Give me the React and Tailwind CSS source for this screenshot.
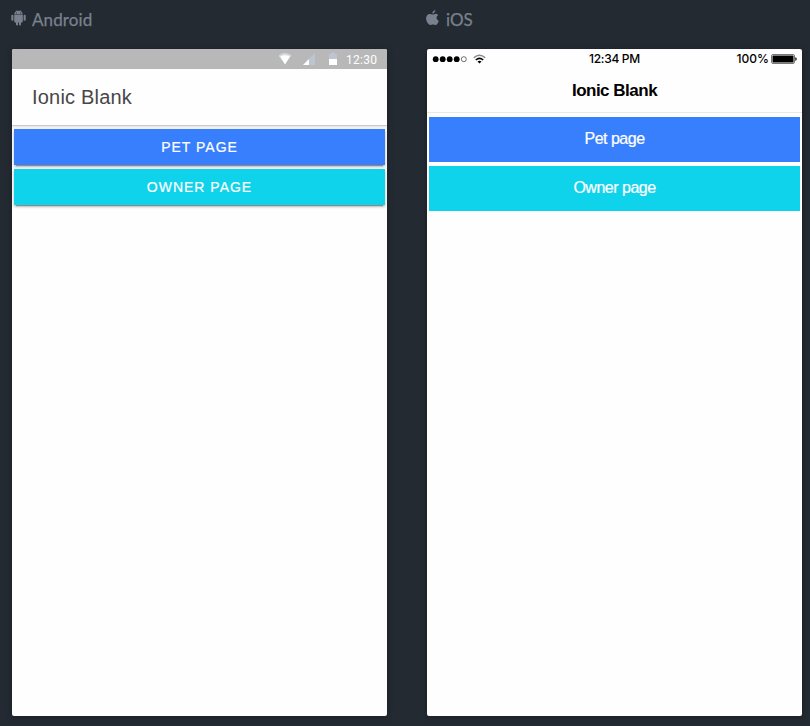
import React from "react";

function AndroidIcon() {
  return (
    <svg className="block h-4 w-[15px] shrink-0" viewBox="0 0 15 16" fill="#78818d">
      <path d="M3.200 4.500C3.300 3 4.100 1.900 5.300 1.300L4.600.3l.4-.2.800 1c1.100-.4 2.300-.4 3.400 0L10 .1l.4.2-.7 1C10.900 1.900 11.700 3 11.800 4.500Z" />
      <circle cx="5.500" cy="2.900" r=".5" fill="#242a32" />
      <circle cx="9.500" cy="2.900" r=".5" fill="#242a32" />
      <path d="M3.200 5h8.600v6.500c0 .5-.4.900-.9.900H10v2a1 1 0 0 1-2 0v-2H7v2a1 1 0 0 1-2 0v-2h-.9c-.5 0-.9-.4-.9-.9Z" />
      <rect x=".3" y="4.800" width="2.100" height="6" rx="1" />
      <rect x="12.600" y="4.800" width="2.100" height="6" rx="1" />
    </svg>
  );
}

function AppleIcon() {
  return (
    <svg className="block h-4 w-[13px] shrink-0" viewBox="0 0 13 16" fill="#78818d">
      <path d="M9.300 0c.15 1.900-1.300 3.600-3 3.700C6.100 1.900 7.600.3 9.300 0ZM12.100 5.300c-2.300 1.400-1.900 4.500.7 5.400-.6 2-1.900 4.400-3.200 4.400-1 0-1.500-.6-2.700-.6-1.200 0-1.700.6-2.600.6C2.200 15-.2 10.900.1 7.800c.3-2.500 1.900-3.900 3.700-3.900 1.200 0 2 .7 2.900.7.8 0 1.800-.8 3.300-.8.900.1 1.600.5 2.100 1.500Z" />
    </svg>
  );
}

function AndroidPhone() {
  return (
    <div className="flex h-[667px] w-[375px] flex-col overflow-hidden rounded-[2px] bg-[#fefefe] shadow-[0_1px_6px_rgba(0,0,0,0.3)]">
      <div className="flex h-5 shrink-0 items-center bg-[#b8b8b8] pl-[267px]">
        <svg className="block h-5 w-[60px] shrink-0" viewBox="0 0 60 20">
          <path d="M-.5 6.500Q6 1.500 12.500 6.500L6 15Z" fill="#d5d9df" />
          <path d="M1.200 7.400Q6 5.300 10.800 7.400L6 15.500Z" fill="#fff" />
          <path d="M24 16 36 4v12Z" fill="#bec5d1" />
          <path d="M24 16 30 10v6Z" fill="#fff" />
          <path d="M50 5h2V3.500h4V5h2v5h-8Z" fill="#bec5d1" />
          <path d="M50 10h8v6h-8Z" fill="#fff" />
        </svg>
        <span className="ml-[7px] mt-[2px] font-[Roboto,sans-serif] text-[12px] leading-4 tracking-[0.3px] text-white">12:30</span>
      </div>
      <div className="relative flex h-14 shrink-0 items-center bg-[#fefefe] pl-5 font-['Liberation_Sans',Arial,sans-serif] text-[20px] tracking-[0.2px] text-[#474747] shadow-[0_1px_1px_rgba(0,0,0,0.13),0_2px_3px_rgba(0,0,0,0.1)]">
        Ionic Blank
      </div>
      <div className="flex flex-col gap-1 px-[2px] pt-1 font-['Liberation_Sans',Arial,sans-serif] text-[14px] tracking-[1px] text-white [-webkit-text-stroke:0.2px_white]">
        <button className="h-9 bg-[#387ffe] shadow-[0_2px_2px_rgba(0,0,0,0.14),0_3px_1px_-2px_rgba(0,0,0,0.3),0_1px_4px_rgba(0,0,0,0.16)]">PET PAGE</button>
        <button className="h-9 bg-[#0fd2eb] shadow-[0_2px_2px_rgba(0,0,0,0.14),0_3px_1px_-2px_rgba(0,0,0,0.3),0_1px_4px_rgba(0,0,0,0.16)]">OWNER PAGE</button>
      </div>
    </div>
  );
}

function IosPhone() {
  return (
    <div className="flex h-[667px] w-[375px] flex-col overflow-hidden rounded-[2px] bg-[#fefefe] shadow-[0_1px_6px_rgba(0,0,0,0.3)]">
      <div className="grid h-5 shrink-0 grid-cols-[1fr_auto_1fr] items-center font-[Inter,sans-serif] text-[12px] font-medium leading-4 text-black">
        <svg className="block h-5 w-[65px]" viewBox="0 0 65 20">
          <circle cx="8.700" cy="10.200" r="2.900" />
          <circle cx="15.700" cy="10.200" r="2.900" />
          <circle cx="22.700" cy="10.200" r="2.900" />
          <circle cx="29.700" cy="10.200" r="2.900" />
          <circle cx="36.800" cy="10.200" r="2.500" fill="none" stroke="#333" strokeWidth=".7" />
          <path d="M46.800 8.800Q52.500 3.600 58.200 8.800" fill="none" stroke="#888" strokeWidth="1.500" />
          <path d="M48.800 11Q52.500 7.600 56.200 11" fill="none" stroke="#000" strokeWidth="1.600" />
          <path d="M50.500 12.600Q52.500 10.900 54.500 12.600L52.500 14.600Z" />
        </svg>
        <span className="tracking-[-0.3px]">12:34 PM</span>
        <span className="flex items-center justify-end pr-[5px]">
          <span>100%</span>
          <svg className="ml-[2px] block h-[10px] w-[26px]" viewBox="0 0 26 10">
            <rect x=".5" y=".5" width="23" height="9" rx="1.500" fill="#fff" stroke="#777" />
            <rect x="1.500" y="1.500" width="21" height="7" rx=".6" />
            <path d="M24.300 3.300q1.400 0 1.400 1.700t-1.400 1.700Z" />
          </svg>
        </span>
      </div>
      <div className="flex h-11 shrink-0 items-center justify-center border-b border-[#e8e8e8] font-['Liberation_Sans',Arial,sans-serif] text-[17px] font-bold tracking-[-0.5px] text-black">
        Ionic Blank
      </div>
      <div className="flex flex-col gap-1 px-[2px] pt-1 font-['Liberation_Sans',Arial,sans-serif] text-[16px] tracking-[-0.5px] text-white [-webkit-text-stroke:0.2px_white]">
        <button className="h-[45px] bg-[#387ffe] pb-[2px]">Pet page</button>
        <button className="h-[45px] bg-[#0fd2eb] pb-[2px]">Owner page</button>
      </div>
    </div>
  );
}

export default function App() {
  return (
    <div className="flex h-[726px] w-[810px] gap-10 overflow-hidden bg-[#242a32] pl-3">
      <section className="w-[375px] shrink-0">
        <div className="-ml-px flex h-[49px] items-start pt-[10px] font-[Lato,sans-serif] text-[17px] leading-[19px] text-[#78818d] [-webkit-text-stroke:0.25px_#78818d]">
          <AndroidIcon />
          <span className="ml-[6px] tracking-[0.1px]">Android</span>
        </div>
        <AndroidPhone />
      </section>
      <section className="w-[375px] shrink-0">
        <div className="-ml-px flex h-[49px] items-start pt-[10px] font-[Lato,sans-serif] text-[17px] leading-[19px] text-[#78818d] [-webkit-text-stroke:0.25px_#78818d]">
          <AppleIcon />
          <span className="ml-[7px]">iOS</span>
        </div>
        <IosPhone />
      </section>
    </div>
  );
}
